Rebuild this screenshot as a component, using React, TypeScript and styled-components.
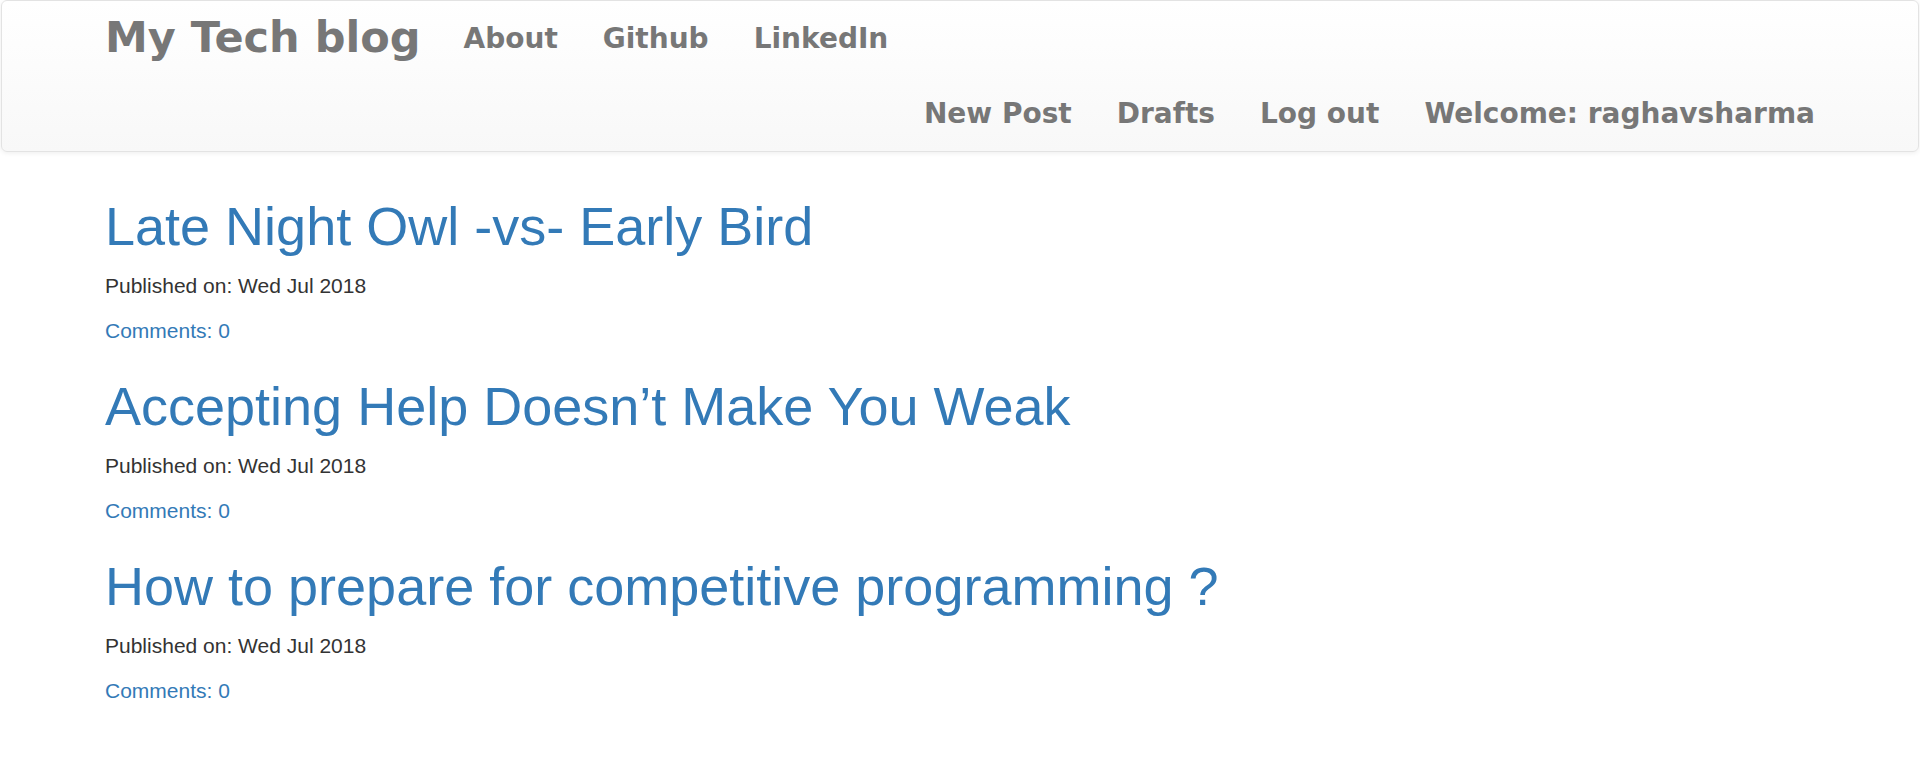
import React from "react";
import styled, { createGlobalStyle } from "styled-components";

const GlobalStyle = createGlobalStyle`
  html, body {
    margin: 0;
    padding: 0;
    background: #ffffff;
  }
  body {
    font-family: "Liberation Sans", Arial, Helvetica, sans-serif;
    font-size: 21px;
    line-height: 30px;
    color: #333333;
  }
  * { box-sizing: border-box; }
`;

const Navbar = styled.nav`
  margin: 0 1px;
  border: 1px solid #e3e3e3;
  border-radius: 6px;
  background-image: linear-gradient(to bottom, #ffffff 0%, #f8f8f8 100%);
  box-shadow: inset 0 1px 0 rgba(255, 255, 255, 0.15), 0 1px 5px rgba(0, 0, 0, 0.075);
`;

const Container = styled.div`
  max-width: 1755px;
  margin: 0 auto;
  padding: 0 22.5px;
`;

const NavRow = styled.div<{ $end?: boolean }>`
  display: flex;
  align-items: flex-start;
  justify-content: ${(p) => (p.$end ? "flex-end" : "flex-start")};
  height: 75px;
  margin-right: ${(p) => (p.$end ? "-22.5px" : "0")};
`;

const Brand = styled.a`
  font-family: "DejaVu Sans", "Liberation Sans", sans-serif;
  font-weight: 700;
  font-size: 43px;
  line-height: 72px;
  color: #777777;
  text-decoration: none;
  padding-right: 22.5px;
  text-shadow: 0 1px 0 rgba(255, 255, 255, 0.25);
`;

const NavList = styled.ul<{ $offset?: number }>`
  display: flex;
  list-style: none;
  margin: 0 0 0 ${(p) => p.$offset ?? 0}px;
  padding: 0;
`;

const NavLink = styled.a`
  display: block;
  font-family: "DejaVu Sans", "Liberation Sans", sans-serif;
  font-weight: 700;
  font-size: 28px;
  line-height: 75px;
  padding: 0 22.5px;
  color: #777777;
  text-decoration: none;
  white-space: nowrap;
  text-shadow: 0 1px 0 rgba(255, 255, 255, 0.25);
`;

const Main = styled(Container)`
  display: flex;
  flex-direction: column;
  gap: 30.6px;
  padding-top: 44.6px;
`;

const Post = styled.article`
  display: block;
`;

const Title = styled.h1`
  margin: 0 0 15px;
  font-family: "Liberation Sans", Arial, sans-serif;
  font-weight: 400;
  font-size: 54px;
  line-height: 59.4px;
  a {
    color: #337ab7;
    text-decoration: none;
  }
`;

const Meta = styled.p`
  margin: 0 0 15px;
  font-size: 21px;
  line-height: 30px;
  color: #333333;
`;

const CommentLine = styled.p`
  margin: 0;
  font-size: 21px;
  line-height: 30px;
  a {
    color: #337ab7;
    text-decoration: none;
  }
`;

const posts = [
  { title: "Late Night Owl -vs- Early Bird", date: "Wed Jul 2018", comments: 0 },
  { title: "Accepting Help Doesn\u2019t Make You Weak", date: "Wed Jul 2018", comments: 0 },
  { title: "How to prepare for competitive programming ?", date: "Wed Jul 2018", comments: 0 },
];

export default function App() {
  return (
    <>
      <GlobalStyle />
      <Navbar>
        <Container>
          <NavRow>
            <Brand href="#">My Tech blog</Brand>
            <NavList $offset={-2}>
              <li><NavLink href="#">About</NavLink></li>
              <li><NavLink href="#">Github</NavLink></li>
              <li><NavLink href="#">LinkedIn</NavLink></li>
            </NavList>
          </NavRow>
          <NavRow $end>
            <NavList>
              <li><NavLink href="#">New Post</NavLink></li>
              <li><NavLink href="#">Drafts</NavLink></li>
              <li><NavLink href="#">Log out</NavLink></li>
              <li><NavLink href="#">Welcome: raghavsharma</NavLink></li>
            </NavList>
          </NavRow>
        </Container>
      </Navbar>
      <Main>
        {posts.map((p) => (
          <Post key={p.title}>
            <Title><a href="#">{p.title}</a></Title>
            <Meta>Published on: {p.date}</Meta>
            <CommentLine><a href="#">Comments: {p.comments}</a></CommentLine>
          </Post>
        ))}
      </Main>
    </>
  );
}
